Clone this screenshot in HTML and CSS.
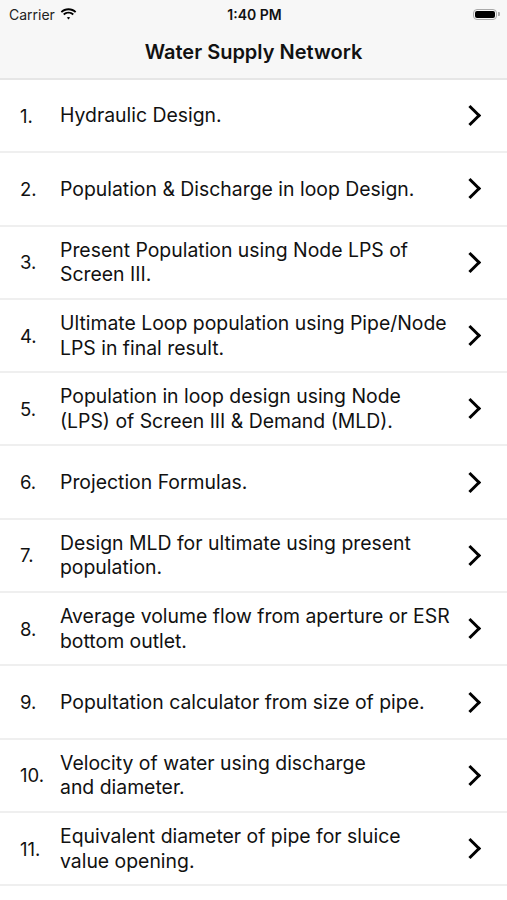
FILE: index.html
```html
<!DOCTYPE html>
<html lang="en">
<head>
    <meta charset="UTF-8">
    <meta name="viewport" content="width=device-width, initial-scale=1.0">
    <title>Water Supply Network</title>
    <link rel="stylesheet" href="styles.css">
</head>
<body>
    <!-- status bar + nav bar -->
    <div class="top">
        <div class="status-bar">
            <div class="carrier">
                Carrier
                <svg class="wifi" width="17" height="12" viewBox="0 0 17 12">
                    <path d="M8.5 2.2c2.5 0 4.8 1 6.5 2.6l1.3-1.4C14.2 1.4 11.5.3 8.5.3S2.8 1.4.7 3.4L2 4.8c1.7-1.6 4-2.6 6.5-2.6z" fill="#000"/>
                    <path d="M8.5 5.6c1.6 0 3 .6 4.1 1.6l1.3-1.4C12.5 4.5 10.6 3.7 8.5 3.7S4.5 4.5 3.1 5.8l1.3 1.4c1.1-1 2.5-1.6 4.1-1.6z" fill="#000"/>
                    <path d="M8.5 9c.7 0 1.2.2 1.7.6L8.5 11.6 6.8 9.6C7.3 9.2 7.8 9 8.5 9z" fill="#000"/>
                </svg>
            </div>
            <div class="time">1:40 PM</div>
            <div class="battery">
                <div class="battery-body"><div class="battery-level"></div></div>
                <div class="battery-cap"></div>
            </div>
        </div>
        <div class="nav-bar">Water Supply Network</div>
    </div>

    <ul class="menu">
        <li class="row"><span class="num">1.</span><span class="label">Hydraulic Design.</span><span class="chevron"></span></li>
        <li class="row"><span class="num">2.</span><span class="label">Population &amp; Discharge in loop Design.</span><span class="chevron"></span></li>
        <li class="row"><span class="num">3.</span><span class="label">Present Population using Node LPS of<br>Screen III.</span><span class="chevron"></span></li>
        <li class="row"><span class="num">4.</span><span class="label">Ultimate Loop population using Pipe/Node<br>LPS in final result.</span><span class="chevron"></span></li>
        <li class="row"><span class="num">5.</span><span class="label">Population in loop design using Node<br>(LPS) of Screen III &amp; Demand (MLD).</span><span class="chevron"></span></li>
        <li class="row"><span class="num">6.</span><span class="label">Projection Formulas.</span><span class="chevron"></span></li>
        <li class="row"><span class="num">7.</span><span class="label">Design MLD for ultimate using present<br>population.</span><span class="chevron"></span></li>
        <li class="row"><span class="num">8.</span><span class="label">Average volume flow from aperture or ESR<br>bottom outlet.</span><span class="chevron"></span></li>
        <li class="row"><span class="num">9.</span><span class="label">Popultation calculator from size of pipe.</span><span class="chevron"></span></li>
        <li class="row"><span class="num">10.</span><span class="label">Velocity of water using discharge<br>and diameter.</span><span class="chevron"></span></li>
        <li class="row"><span class="num">11.</span><span class="label">Equivalent diameter of pipe for sluice<br>value opening.</span><span class="chevron"></span></li>
    </ul>
</body>
</html>
```

FILE: styles.css
```css
body {
    margin: 0;
    font-family: Inter, "Noto Sans", sans-serif;
    color: #111;
    background: #fff;
}

/* 상단 바 */
.top {
    background: #f7f7f7;
    border-bottom: 2px solid #e6e6e6;
}
.status-bar {
    height: 28px;
    display: flex;
    align-items: center;
    justify-content: space-between;
    padding: 0 7px 0 9px;
    font-size: 14px;
}
.carrier {
    display: flex;
    align-items: center;
    gap: 5px;
    width: 100px;
    color: #222;
}
.time {
    font-weight: 600;
}
.battery {
    width: 100px;
    display: flex;
    justify-content: flex-end;
    align-items: center;
}
.battery-body {
    width: 24px;
    height: 11px;
    border: 1px solid #aaa;
    border-radius: 4px;
    padding: 1px;
    box-sizing: border-box;
}
.battery-level {
    width: 100%;
    height: 100%;
    background: #000;
    border-radius: 2px;
}
.battery-cap {
    width: 2px;
    height: 4px;
    background: #aaa;
    border-radius: 0 1px 1px 0;
    margin-left: 1px;
}
.nav-bar {
    height: 50px;
    display: flex;
    align-items: center;
    justify-content: center;
    font-size: 20px;
    font-weight: 600;
    padding-bottom: 2px;
    box-sizing: border-box;
}

/* 목록 */
.menu {
    list-style: none;
    margin: 0;
    padding: 0;
}
.row {
    height: 73.3px;
    display: flex;
    align-items: center;
    padding: 0 25px 0 20px;
    border-bottom: 2px solid #efefef;
    box-sizing: border-box;
}
.num {
    width: 40px;
    flex-shrink: 0;
    font-size: 18.5px;
}
.label {
    flex: 1;
    font-size: 19.4px;
    line-height: 24.5px;
}
.chevron {
    width: 12px;
    height: 12px;
    border-top: 3px solid #000;
    border-right: 3px solid #000;
    transform: rotate(45deg);
    margin-right: 4px;
}
```
